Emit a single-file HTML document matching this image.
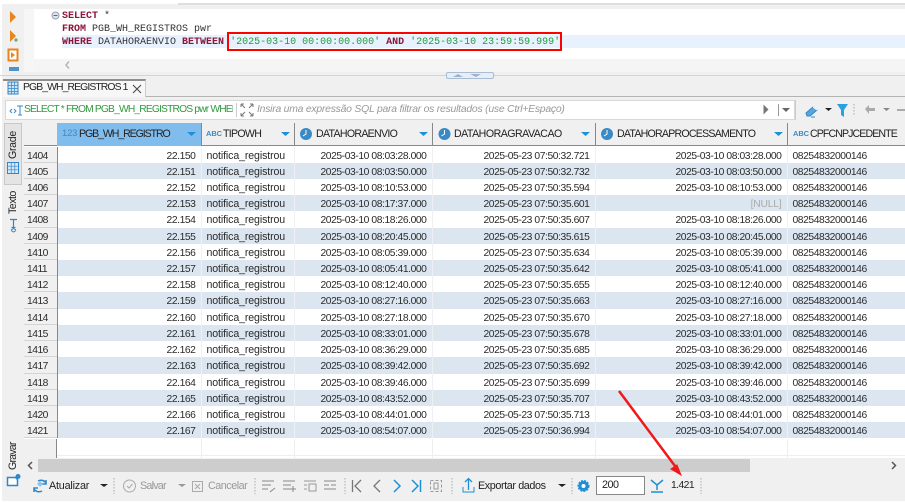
<!DOCTYPE html>
<html><head><meta charset="utf-8"><style>
html,body{margin:0;padding:0;width:905px;height:503px;overflow:hidden;background:#fff}
*{box-sizing:border-box}
body{font-family:"Liberation Sans",sans-serif;font-size:10.6px;color:#222;position:relative}
.a{position:absolute}
.t{position:absolute;white-space:nowrap}
.m{font-family:"Liberation Mono",monospace;font-size:10px;line-height:13px;white-space:pre;position:absolute;left:62px;color:#333}
.k{color:#8a1538;font-weight:bold}.s{color:#1f9a3c}
table{position:absolute;left:24px;top:146.5px;border-collapse:collapse;table-layout:fixed;width:881px}
td{height:16.23px;padding:3px 5px 0;line-height:13px;vertical-align:top;white-space:nowrap;overflow:hidden;border:0;border-right:1px solid #eef0f3;color:#2a2a2a;font-size:10.3px;letter-spacing:-.42px}
td:nth-child(3){font-size:10.6px;letter-spacing:-.12px}
tr:nth-child(even) td{background:#dce6f1}
td:first-child{background:#f0f0f0!important;border-right:1px solid #888;box-shadow:inset 0 -1px 0 #d4d4d4;padding-left:3px;letter-spacing:-.5px}
td.r{text-align:right}
</style></head><body>
<div class="a" style="left:2px;top:4px;width:903px;height:497px;background:#f0f0f0"></div>
<div class="a" style="left:178px;top:3px;width:727px;height:2px;background:#dedede"></div>
<div class="a" style="left:24px;top:9px;width:881px;height:50px;background:#fff"></div>
<div class="a" style="left:24px;top:9px;width:10px;height:63px;background:#f6f6f6"></div>
<div class="a" style="left:34px;top:59px;width:871px;height:13px;background:#f5f5f5"></div>
<div class="a" style="left:62px;top:35px;width:843px;height:13px;background:#e8f2fe"></div>
<svg class="a" style="left:0;top:0" width="62" height="76">
<path d="M10 11l6 6-6 6z" fill="#e8851c"/>
<path d="M10 30l6 6-6 6z" fill="#e8851c"/><path d="M14 40h4M16 38v4" stroke="#4a9a4a" fill="none"/>
<rect x="8.500" y="49.500" width="9" height="11" fill="#fff" stroke="#e8851c" stroke-width="2"/><path d="M11 52l4 3-4 3z" fill="#e8851c"/>
<rect x="9" y="67" width="10" height="4" fill="#4f93c9"/>
<circle cx="55.500" cy="15.500" r="3.500" fill="#dde3ea" stroke="#9aa5b1"/><path d="M53.500 15.500h4" stroke="#667"/>
</svg>
<div class="m" style="top:10px"><span class="k">SELECT</span> *</div>
<div class="m" style="top:22.700px"><span class="k">FROM</span> PGB_WH_REGISTROS pwr</div>
<div class="m" style="top:35.500px"><span class="k">WHERE</span> DATAHORAENVIO <span class="k">BETWEEN</span> <span class="s">'2025-03-10 00:00:00.000'</span> <span class="k">AND</span> <span class="s">'2025-03-10 23:59:59.999'</span></div>
<div class="a" style="left:227px;top:32px;width:335px;height:19px;border:2px solid #f00"></div>
<svg class="a" style="left:64px;top:60px" width="10" height="10"><path d="M5 1.500L2 5l3 3.500" fill="none" stroke="#b5b5b5" stroke-width="1.500"/></svg>
<div class="a" style="left:0;top:75px;width:905px;height:1px;background:#c9d6e6"></div>
<div class="a" style="left:446px;top:72px;width:48px;height:7px;background:#e8eef5;border:1px solid #a8bdd3;border-radius:2px"></div>
<svg class="a" style="left:446px;top:72px" width="48" height="7"><path d="M7 5l5-3 5 3zM24 2h11l-5 3z" fill="#9fb3c8"/></svg>
<div class="a" style="left:3px;top:79px;width:143px;height:18px;background:#f7f7f7;border-top:2px solid #8e8e8e;border-right:1px solid #ccc"></div>
<div class="a" style="left:146px;top:96px;width:759px;height:1px;background:#b4b4b4"></div>
<svg class="a" style="left:7px;top:81px" width="12" height="14"><rect x="1" y="1" width="10" height="12" fill="#cfe4f6" stroke="#2f86c8"/><path d="M1 4.500h10M1 7.500h10M1 10.500h10M4.500 1v12M7.500 1v12" stroke="#2f86c8" stroke-width=".7"/></svg>
<div class="t" style="left:23px;top:81px;line-height:14px;font-size:10.400px;letter-spacing:-.9px">PGB_WH_REGISTROS 1</div>
<svg class="a" style="left:132px;top:84px" width="10" height="10"><path d="M1 1l8 8M9 1l-8 8" stroke="#444"/></svg>
<div class="a" style="left:5px;top:100px;width:790px;height:20px;background:#fff;border:1px solid #d8d8d8"></div>
<svg class="a" style="left:8px;top:104px" width="16" height="13"><path d="M4 5L2 7l2 2M6 5l2 2-2 2" stroke="#3a8ac6" fill="none"/><path d="M9 2h6M12 2v9M10 11h4" stroke="#3a8ac6" fill="none"/></svg>
<div class="t" style="left:24px;top:103px;color:#2f9a3e;line-height:14px;width:209px;overflow:hidden;font-size:10.300px;letter-spacing:-.85px">SELECT * FROM PGB_WH_REGISTROS pwr WHERE</div>
<div class="a" style="left:236px;top:103px;width:1px;height:14px;background:#ccc"></div>
<svg class="a" style="left:240px;top:103px" width="14" height="14"><path d="M1 1l4 4M1 1h3M1 1v3M13 1L9 5M13 1h-3M13 1v3M1 13l4-4M1 13h3M1 13v-3M13 13L9 9M13 13h-3M13 13v-3" stroke="#777" fill="none"/></svg>
<div class="t" style="left:257px;top:103px;color:#999;font-style:italic;line-height:14px;font-size:10.400px;letter-spacing:-.23px">Insira uma expressão SQL para filtrar os resultados (use Ctrl+Espaço)</div>
<svg class="a" style="left:760px;top:100px" width="145" height="20"><path d="M3.500 4.500l5 5-5 5z" fill="#777"/><path d="M18.500 4v12" stroke="#999"/><path d="M22 8h8l-4 4z" fill="#666"/><path d="M35.500 0v20" stroke="#ccc"/>
<path d="M46 13l7-6 4 3-7 6h-3z" fill="#5aa5dc" stroke="#2f86c8"/><path d="M53 7l4 3" stroke="#fff"/><path d="M51 17h4" stroke="#2f86c8"/><path d="M65 8h7l-3.500 3z" fill="#222"/>
<path d="M77 4h11l-4 6v7l-3-2v-5z" fill="#2ba0e0"/><path d="M94 4v12" stroke="#aaa" stroke-dasharray="1.500 1.500"/>
<path d="M105 9l4-4v3h6v3h-6v3z" fill="#aaa"/><path d="M123 8h7l-3.500 3z" fill="#888"/><path d="M137 9h8v2h-8z" fill="#aaa"/></svg>
<div class="a" style="left:4px;top:123px;width:18px;height:62px;background:#e4e4e4;border:1px solid #c8c8c8"></div>
<div class="t" style="left:6px;top:159px;transform:rotate(-90deg);transform-origin:0 0;line-height:14px;letter-spacing:-.3px">Grade</div>
<svg class="a" style="left:7px;top:162px" width="12" height="12"><rect x=".5" y=".5" width="11" height="11" fill="#d7e9f7" stroke="#2f86c8"/><path d="M.5 4.200h11M.5 7.800h11M4.200 .5v11M7.800 .5v11" stroke="#2f86c8" stroke-width=".7"/></svg>
<div class="t" style="left:6px;top:214px;transform:rotate(-90deg);transform-origin:0 0;line-height:14px;letter-spacing:-.5px">Texto</div>
<svg class="a" style="left:7px;top:218px" width="12" height="15"><path d="M3 1.500h7M6.500 1.500v8M4.500 9.500h4" stroke="#2f86c8" stroke-width="1.200" fill="none"/><path d="M4 12l2.500-1.500L9 12M4 12.500l2.500 1.500L9 12.500" stroke="#2f86c8" fill="none"/></svg>
<div class="t" style="left:6px;top:470px;transform:rotate(-90deg);transform-origin:0 0;line-height:14px;letter-spacing:-.8px">Gravar</div>
<svg class="a" style="left:6px;top:473px" width="15" height="14"><path d="M1.500 4.500h8l2 2v6h-10z" fill="#fff" stroke="#2f86c8" stroke-width="1.500"/><circle cx="12" cy="3.500" r="2.500" fill="#2f86c8"/></svg>
<div class="a" style="left:24px;top:123px;width:881px;height:335px;background:#fff"></div>
<div class="a" style="left:24px;top:123px;width:881px;height:23px;background:#f0f0f0;border-bottom:1px solid #888"></div>
<div class="a" style="left:57px;top:123px;width:144px;height:23px;background:#80bcec"></div>
<div class="a" style="left:201px;top:123px;width:1px;height:23px;background:#888"></div>
<div class="a" style="left:294px;top:123px;width:1px;height:23px;background:#888"></div>
<div class="a" style="left:432px;top:123px;width:1px;height:23px;background:#888"></div>
<div class="a" style="left:595px;top:123px;width:1px;height:23px;background:#888"></div>
<div class="a" style="left:787px;top:123px;width:1px;height:23px;background:#888"></div>
<div class="t" style="left:62px;top:127px;line-height:14px;font-size:9.500px;letter-spacing:-.2px;color:#3a8ac6">123</div>
<div class="t" style="left:79px;top:127px;line-height:14px;letter-spacing:-1.1px">PGB_WH_REGISTRO</div>
<div class="t" style="left:206px;top:128px;line-height:12px;font-size:7.500px;font-weight:bold;color:#3a8ac6;letter-spacing:-.1px">ABC</div>
<div class="t" style="left:223px;top:127px;line-height:14px;letter-spacing:-.7px">TIPOWH</div>
<div class="t" style="left:316px;top:127px;line-height:14px;letter-spacing:-.7px">DATAHORAENVIO</div>
<div class="t" style="left:454px;top:127px;line-height:14px;letter-spacing:-.5px">DATAHORAGRAVACAO</div>
<div class="t" style="left:617px;top:127px;line-height:14px;letter-spacing:-.76px">DATAHORAPROCESSAMENTO</div>
<div class="t" style="left:793px;top:128px;line-height:12px;font-size:7.500px;font-weight:bold;color:#3a8ac6;letter-spacing:-.1px">ABC</div>
<div class="t" style="left:810px;top:127px;line-height:14px;letter-spacing:-.9px">CPFCNPJCEDENTE</div>
<svg class="a" style="left:0;top:123px" width="905" height="23"><g fill="#1f8fd6"><path d="M187 9h9l-4.500 4zM281 9h9l-4.500 4zM419 9h9l-4.500 4zM581 9h9l-4.500 4zM774 9h9l-4.500 4z"/></g>
<g fill="#3a8ac6"><circle cx="306" cy="11" r="6"/><circle cx="444.500" cy="11" r="6"/><circle cx="607" cy="11" r="6"/></g>
<g stroke="#fff" fill="none"><path d="M306 7v4l-3 2M444.500 7v4l-3 2M607 7v4l-3 2"/></g></svg>
<table><colgroup><col style="width:33px"><col style="width:144px"><col style="width:93px"><col style="width:138px"><col style="width:163px"><col style="width:192px"><col style="width:118px"></colgroup>
<tr><td>1404</td><td class="r">22.150</td><td>notifica_registrou</td><td class="r">2025-03-10 08:03:28.000</td><td class="r">2025-05-23 07:50:32.721</td><td class="r">2025-03-10 08:03:28.000</td><td>08254832000146</td></tr>
<tr><td>1405</td><td class="r">22.151</td><td>notifica_registrou</td><td class="r">2025-03-10 08:03:50.000</td><td class="r">2025-05-23 07:50:32.732</td><td class="r">2025-03-10 08:03:50.000</td><td>08254832000146</td></tr>
<tr><td>1406</td><td class="r">22.152</td><td>notifica_registrou</td><td class="r">2025-03-10 08:10:53.000</td><td class="r">2025-05-23 07:50:35.594</td><td class="r">2025-03-10 08:10:53.000</td><td>08254832000146</td></tr>
<tr><td>1407</td><td class="r">22.153</td><td>notifica_registrou</td><td class="r">2025-03-10 08:17:37.000</td><td class="r">2025-05-23 07:50:35.601</td><td class="r" style="color:#aaa;letter-spacing:-.2px">[NULL]</td><td>08254832000146</td></tr>
<tr><td>1408</td><td class="r">22.154</td><td>notifica_registrou</td><td class="r">2025-03-10 08:18:26.000</td><td class="r">2025-05-23 07:50:35.607</td><td class="r">2025-03-10 08:18:26.000</td><td>08254832000146</td></tr>
<tr><td>1409</td><td class="r">22.155</td><td>notifica_registrou</td><td class="r">2025-03-10 08:20:45.000</td><td class="r">2025-05-23 07:50:35.615</td><td class="r">2025-03-10 08:20:45.000</td><td>08254832000146</td></tr>
<tr><td>1410</td><td class="r">22.156</td><td>notifica_registrou</td><td class="r">2025-03-10 08:05:39.000</td><td class="r">2025-05-23 07:50:35.634</td><td class="r">2025-03-10 08:05:39.000</td><td>08254832000146</td></tr>
<tr><td>1411</td><td class="r">22.157</td><td>notifica_registrou</td><td class="r">2025-03-10 08:05:41.000</td><td class="r">2025-05-23 07:50:35.642</td><td class="r">2025-03-10 08:05:41.000</td><td>08254832000146</td></tr>
<tr><td>1412</td><td class="r">22.158</td><td>notifica_registrou</td><td class="r">2025-03-10 08:12:40.000</td><td class="r">2025-05-23 07:50:35.655</td><td class="r">2025-03-10 08:12:40.000</td><td>08254832000146</td></tr>
<tr><td>1413</td><td class="r">22.159</td><td>notifica_registrou</td><td class="r">2025-03-10 08:27:16.000</td><td class="r">2025-05-23 07:50:35.663</td><td class="r">2025-03-10 08:27:16.000</td><td>08254832000146</td></tr>
<tr><td>1414</td><td class="r">22.160</td><td>notifica_registrou</td><td class="r">2025-03-10 08:27:18.000</td><td class="r">2025-05-23 07:50:35.670</td><td class="r">2025-03-10 08:27:18.000</td><td>08254832000146</td></tr>
<tr><td>1415</td><td class="r">22.161</td><td>notifica_registrou</td><td class="r">2025-03-10 08:33:01.000</td><td class="r">2025-05-23 07:50:35.678</td><td class="r">2025-03-10 08:33:01.000</td><td>08254832000146</td></tr>
<tr><td>1416</td><td class="r">22.162</td><td>notifica_registrou</td><td class="r">2025-03-10 08:36:29.000</td><td class="r">2025-05-23 07:50:35.685</td><td class="r">2025-03-10 08:36:29.000</td><td>08254832000146</td></tr>
<tr><td>1417</td><td class="r">22.163</td><td>notifica_registrou</td><td class="r">2025-03-10 08:39:42.000</td><td class="r">2025-05-23 07:50:35.692</td><td class="r">2025-03-10 08:39:42.000</td><td>08254832000146</td></tr>
<tr><td>1418</td><td class="r">22.164</td><td>notifica_registrou</td><td class="r">2025-03-10 08:39:46.000</td><td class="r">2025-05-23 07:50:35.699</td><td class="r">2025-03-10 08:39:46.000</td><td>08254832000146</td></tr>
<tr><td>1419</td><td class="r">22.165</td><td>notifica_registrou</td><td class="r">2025-03-10 08:43:52.000</td><td class="r">2025-05-23 07:50:35.707</td><td class="r">2025-03-10 08:43:52.000</td><td>08254832000146</td></tr>
<tr><td>1420</td><td class="r">22.166</td><td>notifica_registrou</td><td class="r">2025-03-10 08:44:01.000</td><td class="r">2025-05-23 07:50:35.713</td><td class="r">2025-03-10 08:44:01.000</td><td>08254832000146</td></tr>
<tr><td>1421</td><td class="r">22.167</td><td>notifica_registrou</td><td class="r">2025-03-10 08:54:07.000</td><td class="r">2025-05-23 07:50:36.994</td><td class="r">2025-03-10 08:54:07.000</td><td>08254832000146</td></tr>
</table>
<div class="a" style="left:24px;top:439px;width:33px;height:19px;background:#f0f0f0;border-right:1px solid #888"></div>
<div class="a" style="left:57px;top:455px;width:848px;height:1px;background:#eee"></div>
<div class="a" style="left:201px;top:439px;width:1px;height:19px;background:#eee"></div>
<div class="a" style="left:294px;top:439px;width:1px;height:19px;background:#eee"></div>
<div class="a" style="left:432px;top:439px;width:1px;height:19px;background:#eee"></div>
<div class="a" style="left:595px;top:439px;width:1px;height:19px;background:#eee"></div>
<div class="a" style="left:787px;top:439px;width:1px;height:19px;background:#eee"></div>
<div class="a" style="left:24px;top:458px;width:881px;height:14px;background:#f0f0f0"></div>
<div class="a" style="left:38px;top:459px;width:712px;height:13px;background:#cdcdcd"></div>
<svg class="a" style="left:26px;top:460px" width="880" height="11"><path d="M6 2L2.500 5.500 6 9" fill="none" stroke="#555" stroke-width="1.500"/><path d="M866 2l3.500 3.500L866 9" fill="none" stroke="#555" stroke-width="1.500"/></svg>
<div class="t" style="left:49px;top:479px;line-height:14px;font-size:10.800px;letter-spacing:-.2px">Atualizar</div>
<div class="t" style="left:140px;top:479px;line-height:14px;color:#999;font-size:10.800px;letter-spacing:-.8px">Salvar</div>
<div class="t" style="left:208px;top:479px;line-height:14px;color:#999;font-size:10.800px;letter-spacing:-.5px">Cancelar</div>
<div class="t" style="left:478px;top:479px;line-height:14px;font-size:10.800px;letter-spacing:-.4px">Exportar dados</div>
<div class="a" style="left:596px;top:476px;width:49px;height:19px;background:#fff;border:1px solid #888;padding-left:5px;line-height:17px;font-size:10.800px;letter-spacing:-.5px">200</div>
<div class="t" style="left:671px;top:479px;line-height:14px;font-size:10.400px;letter-spacing:-.6px">1.421</div>
<svg class="a" style="left:0;top:472px" width="905" height="28">
<path d="M38 9a6 6 0 0 1 8 2M46 8v4h-4M42 19a6 6 0 0 1-8-2M34 20v-4h4" fill="none" stroke="#2f86c8" stroke-width="1.500"/><path d="M37 12l3-3 3 3-3 3z" fill="#8cc4ec"/>
<path d="M100 12h8l-4 3z" fill="#222"/><path d="M114 6v16" stroke="#aaa" stroke-dasharray="1.500 1.500"/>
<circle cx="129.500" cy="14" r="6" fill="none" stroke="#aaa"/><path d="M127 14l2 2 3.500-4" fill="none" stroke="#aaa"/>
<path d="M178 12h8l-4 3z" fill="#999"/><rect x="192.500" y="9.500" width="10" height="10" fill="none" stroke="#aaa"/><path d="M195 12l5 5M200 12l-5 5" stroke="#aaa"/>
<path d="M255 6v16" stroke="#aaa" stroke-dasharray="1.500 1.500"/>
<path d="M262 9h12M262 13h9M262 17h6" stroke="#888" fill="none"/><path d="M270 20l5-4" stroke="#888"/>
<path d="M283 9h12M283 13h8M283 17h8M293 14v6M290 17h6" stroke="#888" fill="none"/>
<path d="M304 9h12M304 13h3M304 17h3" stroke="#999" fill="none"/><rect x="309" y="12" width="7" height="7" fill="none" stroke="#999"/>
<path d="M324 9h12M324 13h5M324 17h12M331 13h5" stroke="#888" fill="none"/>
<path d="M345 6v16" stroke="#aaa" stroke-dasharray="1.500 1.500"/>
<path d="M352.500 8v12M361 8l-6 6 6 6" fill="none" stroke="#777" stroke-width="1.300"/>
<path d="M380 8l-6 6 6 6" fill="none" stroke="#777" stroke-width="1.300"/>
<path d="M394 8l6 6-6 6" fill="none" stroke="#1f8fd6" stroke-width="1.500"/>
<path d="M412 8l6 6-6 6M420.500 8v12" fill="none" stroke="#1f8fd6" stroke-width="1.500"/>
<rect x="430.500" y="8.500" width="11" height="11" fill="none" stroke="#999" stroke-dasharray="3 2"/><rect x="434" y="11" width="4" height="6" fill="none" stroke="#999"/>
<path d="M452 6v16" stroke="#aaa" stroke-dasharray="1.500 1.500"/>
<path d="M463 15v5h11v-5" fill="none" stroke="#1f8fd6"/><path d="M468.500 18V7M465 10l3.500-3.500L472 10" fill="none" stroke="#1f8fd6" stroke-width="1.300"/>
<path d="M558 12h8l-4 3z" fill="#222"/><path d="M572 6v16" stroke="#aaa" stroke-dasharray="1.500 1.500"/>
<circle cx="583.500" cy="14" r="5" fill="#1f8fd6" stroke="#1f8fd6" stroke-width="2" stroke-dasharray="2 1"/><circle cx="583.500" cy="14" r="2" fill="#fff"/>
<path d="M651 8l6 5 6-5M657 13v5M651 20h12" fill="none" stroke="#1f8fd6" stroke-width="1.500"/>
<path d="M701 6v16" stroke="#aaa" stroke-dasharray="1.500 1.500"/>
</svg>
<svg class="a" style="left:0;top:0" width="905" height="503"><path d="M619 391L675 466" stroke="#f01818" stroke-width="2.500"/><path d="M681 475l-10-6 6-4z" fill="#f01818" stroke="#f01818"/></svg>
</body></html>
